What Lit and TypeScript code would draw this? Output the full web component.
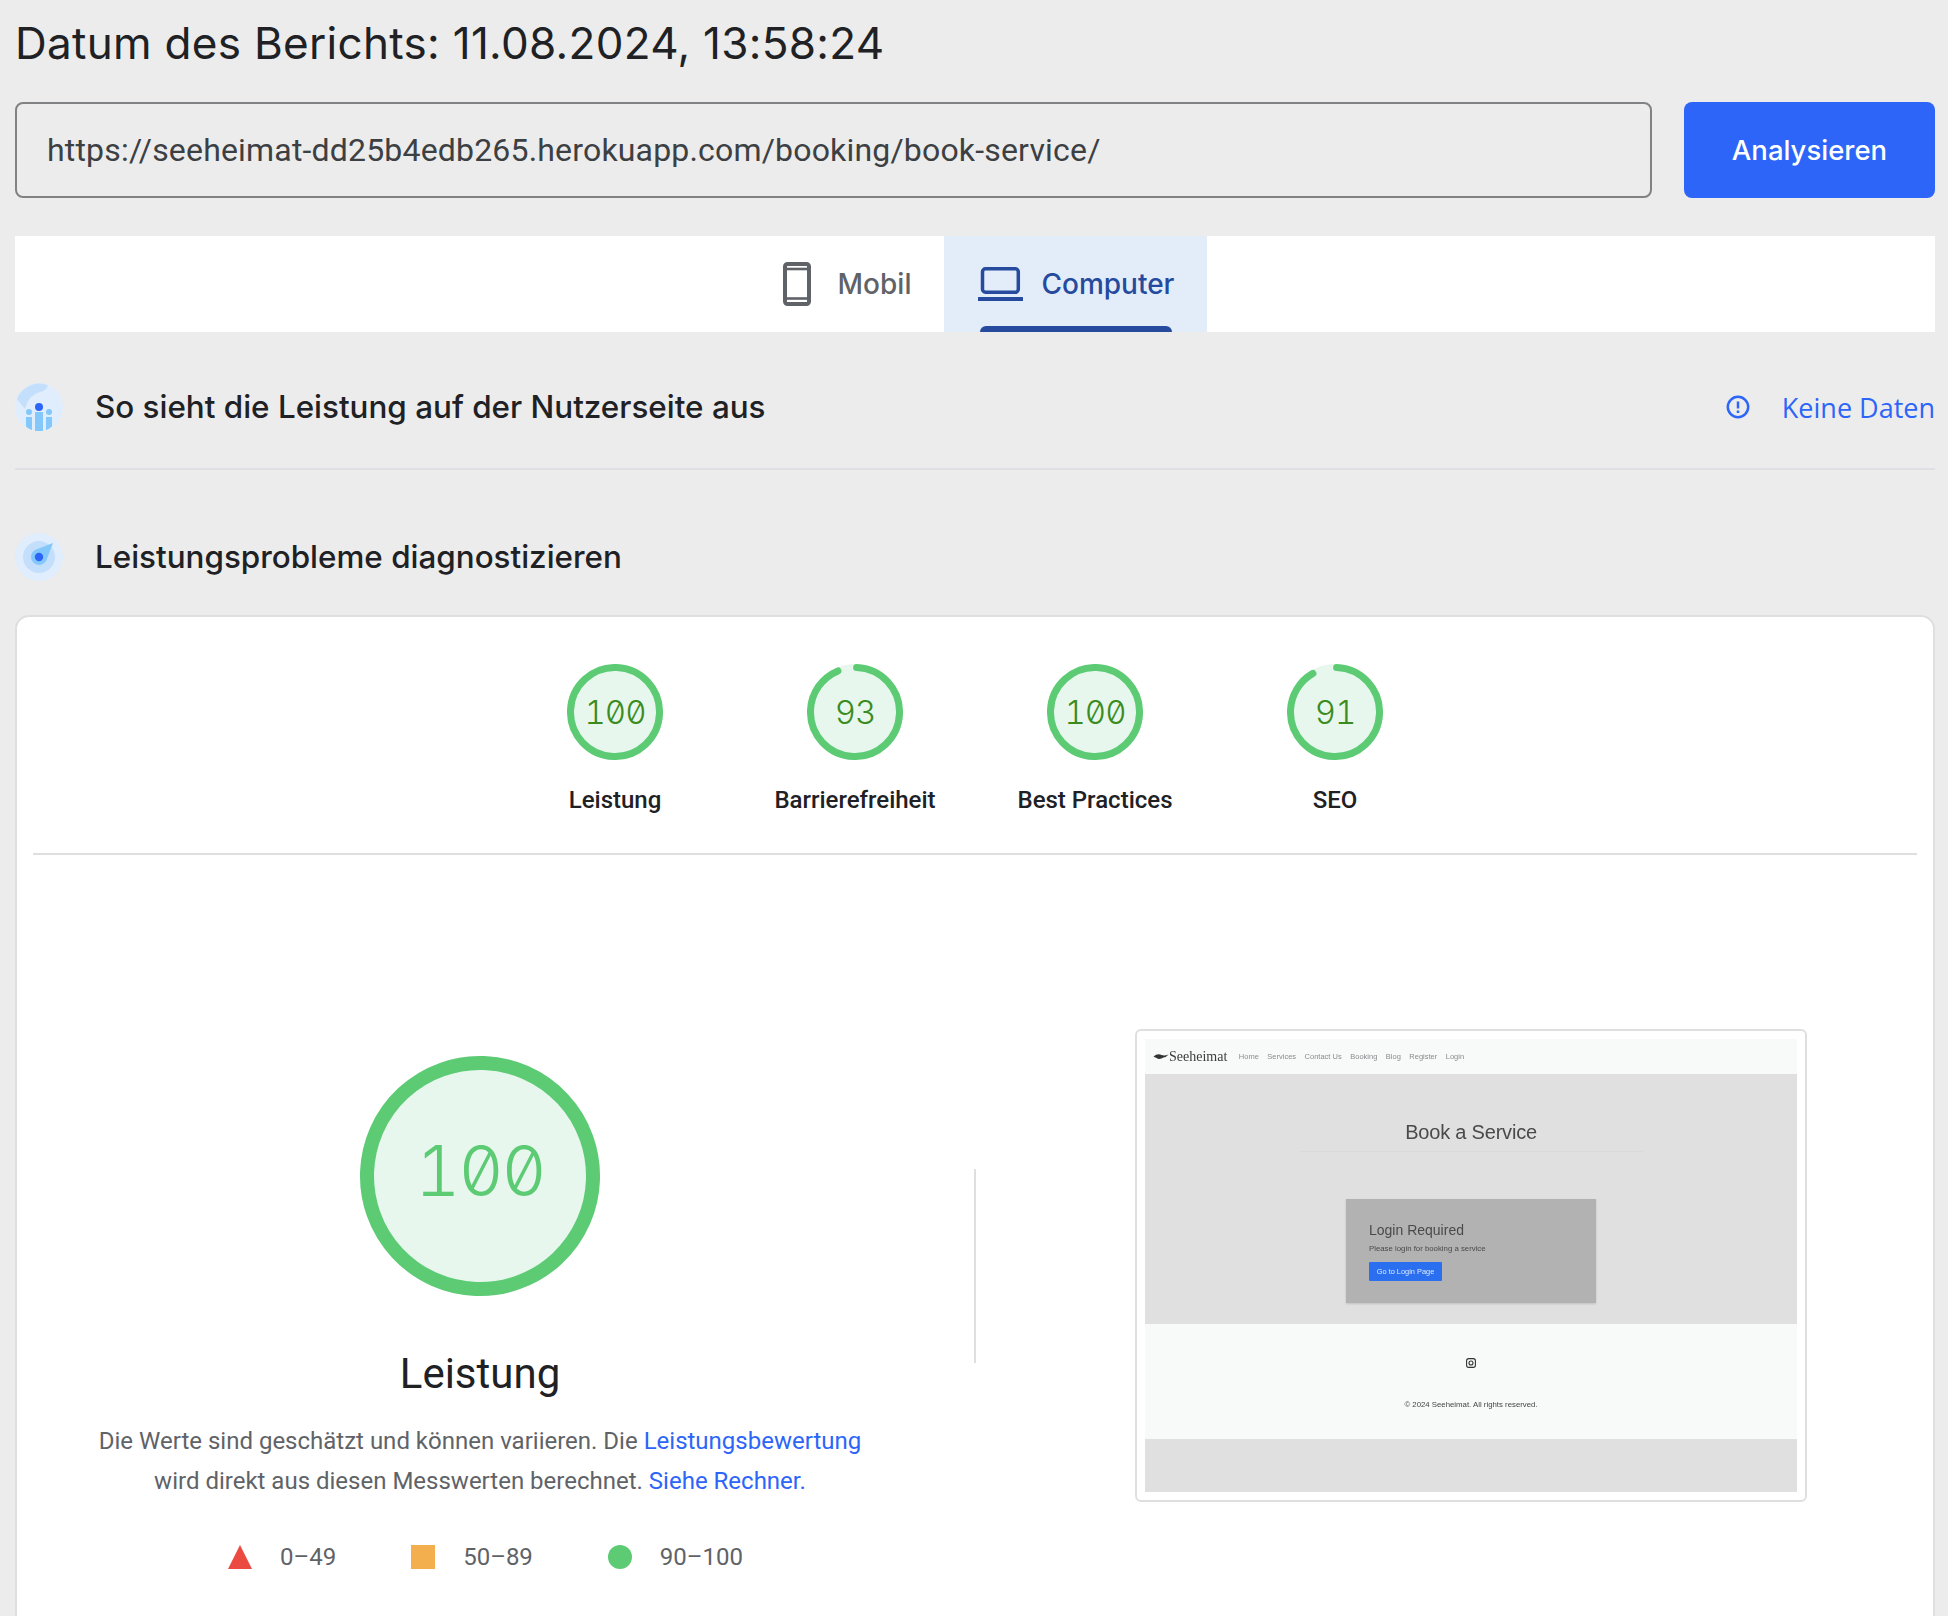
import { LitElement, html, css, svg } from 'lit';
import { customElement, property } from 'lit/decorators.js';

const GREEN = '#5ccb74';

@customElement('score-gauge')
export class ScoreGauge extends LitElement {
  static styles = css`
    :host {
      display: block;
    }
    svg {
      display: block;
      width: 100%;
      height: 100%;
    }
    text {
      font-family: Inter, sans-serif;
      font-weight: 350;
      font-feature-settings: 'tnum', 'zero';
      text-anchor: middle;
      dominant-baseline: central;
    }
  `;

  @property({ type: Number }) score = 100;
  @property({ type: Number }) size = 96;
  @property({ type: Number }) ring = 7;
  @property({ type: Number, attribute: 'font-size' }) textSize = 28;
  @property({ type: Number }) lift = 0;
  @property({ type: String }) ink = '#3a8c20';

  render() {
    const c = this.size / 2;
    const r = c - this.ring / 2;
    const circ = 2 * Math.PI * r;
    const dash = this.score >= 100 ? `${circ} 0` : `${(this.score / 100) * circ} ${circ}`;
    return html`<svg viewBox="0 0 ${this.size} ${this.size}">
      ${svg`<circle cx=${c} cy=${c} r=${c} fill="#e7f7ee"></circle>
        <circle cx=${c} cy=${c} r=${r} fill="none" stroke=${GREEN} stroke-width=${this.ring}
          stroke-linecap="round" stroke-dasharray=${dash} transform="rotate(-87.9 ${c} ${c})"></circle>
        <text x=${c} y=${c - this.lift} fill=${this.ink} font-size=${this.textSize}
          letter-spacing=${-this.textSize * 0.03}>${this.score}</text>`}
    </svg>`;
  }
}

@customElement('page-preview')
export class PagePreview extends LitElement {
  static styles = css`
    :host {
      display: block;
      width: 672px;
      height: 473px;
      box-sizing: border-box;
      border: 2px solid #dfdfdf;
      border-radius: 6px;
      padding: 8px;
      font-family: 'Liberation Sans', sans-serif;
    }
    .shot {
      height: 100%;
      display: flex;
      flex-direction: column;
      background: #e0e0e0;
      filter: blur(0.6px);
    }
    nav {
      height: 35px;
      flex: none;
      background: #f8f9f9;
      display: flex;
      align-items: center;
      padding-left: 8px;
      color: #8a8c8e;
      font-size: 7.5px;
      gap: 8.5px;
    }
    .brand {
      display: flex;
      align-items: center;
      gap: 0;
      font-family: 'Liberation Serif', serif;
      font-size: 14px;
      color: #3c3c3c;
      margin-right: 3px;
    }
    .hero {
      height: 250px;
      flex: none;
      box-sizing: border-box;
      padding-top: 47px;
      display: flex;
      flex-direction: column;
      align-items: center;
    }
    h2 {
      margin: 0;
      font-size: 20px;
      letter-spacing: -0.2px;
      font-weight: 400;
      line-height: 22px;
      color: #4a4a4a;
    }
    .hero hr {
      width: 344px;
      margin: 8px 0 0;
      border: 0;
      height: 1px;
      background: #dadada;
    }
    .login {
      width: 250px;
      height: 104px;
      margin-top: 47px;
      box-sizing: border-box;
      padding: 23px;
      background: #b2b2b2;
      box-shadow: 0 1px 2px rgba(0, 0, 0, 0.15);
      color: #4a4a4a;
    }
    h3 {
      margin: 0;
      font-size: 14px;
      font-weight: 400;
      line-height: 17px;
    }
    .login p {
      margin: 5px 0 0;
      font-size: 7.8px;
      line-height: 10px;
    }
    .go {
      width: 73px;
      height: 19px;
      margin-top: 8px;
      background: #2a6ff0;
      border-radius: 1px;
      color: #dfe9fb;
      font-size: 7.4px;
      display: flex;
      align-items: center;
      justify-content: center;
    }
    footer {
      height: 115px;
      flex: none;
      background: #f8f9f9;
      display: flex;
      flex-direction: column;
      align-items: center;
      color: #444;
      font-size: 7.8px;
    }
    footer svg {
      margin-top: 34px;
      display: block;
    }
    footer p {
      margin: 32px 0 0;
      line-height: 10px;
    }
  `;

  render() {
    return html`<div class="shot">
      <nav>
        <span class="brand">
          <svg width="16" height="7" viewBox="0 0 15 7"><path d="M0 3.5 Q4 0 8 2 Q11 3 15 1.5 Q13 4 10 4.6 Q6 7 3 5 Q1.5 4 0 3.5Z" fill="#333"></path></svg>
          Seeheimat
        </span>
        <span>Home</span><span>Services</span><span>Contact Us</span><span>Booking</span><span>Blog</span><span>Register</span><span>Login</span>
      </nav>
      <div class="hero">
        <h2>Book a Service</h2>
        <hr />
        <div class="login">
          <h3>Login Required</h3>
          <p>Please login for booking a service</p>
          <div class="go">Go to Login Page</div>
        </div>
      </div>
      <footer>
        <svg width="10" height="10" viewBox="0 0 10 10" fill="none" stroke="#333" stroke-width="1.1">
          <rect x="0.6" y="0.6" width="8.8" height="8.8" rx="2.2"></rect>
          <circle cx="5" cy="5" r="2"></circle>
        </svg>
        <p>© 2024 Seeheimat. All rights reserved.</p>
      </footer>
    </div>`;
  }
}

@customElement('app-root')
export class AppRoot extends LitElement {
  static styles = css`
    :host {
      display: block;
      width: 1948px;
      height: 1616px;
      overflow: hidden;
      box-sizing: border-box;
      padding: 0 13px 0 15px;
      background: #ececec;
      color: #202124;
      font-family: Roboto, sans-serif;
    }
    h1 {
      margin: 0;
      height: 84px;
      line-height: 86px;
      font-family: Inter, sans-serif;
      font-size: 44px;
      letter-spacing: 0.3px;
      font-weight: 400;
    }
    .search {
      margin-top: 18px;
      display: flex;
      gap: 32px;
      height: 96px;
    }
    .url {
      flex: 1;
      box-sizing: border-box;
      border: 2px solid #808284;
      border-radius: 8px;
      padding-left: 30px;
      display: flex;
      align-items: center;
      font-size: 32px;
      letter-spacing: 0.18px;
      color: #3c4043;
    }
    .analyze {
      width: 251px;
      background: #2d65f8;
      border-radius: 8px;
      color: #fff;
      font-family: Inter, sans-serif;
      font-size: 27.5px;
      font-weight: 500;
      display: flex;
      align-items: center;
      justify-content: center;
    }
    .tabs {
      margin-top: 38px;
      height: 96px;
      background: #fff;
      display: flex;
      justify-content: center;
      padding-left: 6px;
      font-family: Inter, sans-serif;
      font-size: 28px;
      font-weight: 500;
    }
    .tab {
      display: flex;
      align-items: center;
      gap: 27px;
      padding: 0 33px 0 34px;
      color: #5f6368;
      position: relative;
    }
    .tab.active {
      background: #e3edfa;
      color: #254a9e;
      gap: 18px;
    }
    .tab.active::after {
      content: '';
      position: absolute;
      left: 36px;
      right: 35px;
      bottom: 0;
      height: 6px;
      background: #254a9e;
      border-radius: 6px 6px 0 0;
    }
    .tab svg {
      display: block;
      flex: none;
    }
    .section {
      display: flex;
      align-items: center;
      gap: 32px;
      font-family: Inter, sans-serif;
      font-size: 31.4px;
      font-weight: 500;
    }
    .section svg {
      display: block;
      flex: none;
    }
    .section span.name {
      flex: 1;
    }
    .field {
      margin-top: 51px;
      padding-bottom: 37px;
      border-bottom: 2px solid #dfe0e3;
    }
    .diag {
      margin-top: 63px;
    }
    .nodata {
      display: flex;
      align-items: center;
      gap: 32px;
      color: #2d65f8;
      font-family: 'Open Sans', sans-serif;
      font-size: 27px;
      font-weight: 400;
    }
    .card {
      margin-top: 34px;
      box-sizing: border-box;
      height: 1100px;
      background: #fff;
      border: 2px solid #dfdfdf;
      border-radius: 14px;
      padding: 0 16px;
    }
    .scores {
      height: 238px;
      box-sizing: border-box;
      padding-top: 47px;
      border-bottom: 2px solid #dfdfdf;
      display: flex;
      justify-content: center;
      gap: 80px;
    }
    .score {
      width: 160px;
      display: flex;
      flex-direction: column;
      align-items: center;
      gap: 26px;
      font-size: 24px;
      font-weight: 500;
      line-height: 28px;
      white-space: nowrap;
    }
    .score score-gauge {
      width: 96px;
      height: 96px;
    }
    .detail {
      display: flex;
      padding-top: 174px;
    }
    .summary {
      width: 768px;
      margin-left: 63px;
      display: flex;
      flex-direction: column;
      align-items: center;
    }
    .summary score-gauge {
      width: 240px;
      height: 240px;
      margin-top: 27px;
    }
    .summary h2 {
      margin: 52px 0 0;
      font-size: 42px;
      font-weight: 400;
      line-height: 52px;
    }
    .summary p {
      margin: 21px 0 0;
      width: 768px;
      text-align: center;
      font-size: 24px;
      line-height: 40px;
      color: #5f6368;
    }
    a {
      color: #2d65f8;
      text-decoration: none;
    }
    .legend {
      margin: 40px 0 0 11px;
      display: flex;
      gap: 75px;
      font-size: 24px;
      line-height: 32px;
      color: #5f6368;
    }
    .legend div {
      display: flex;
      align-items: center;
      gap: 28px;
    }
    .legend svg {
      display: block;
    }
    .rule {
      width: 2px;
      height: 194px;
      background: #dfdfdf;
      margin: 140px 0 0 110px;
      flex: none;
    }
    page-preview {
      flex: none;
      margin-left: 159px;
    }
  `;

  render() {
    return html`
      <h1>Datum des Berichts: 11.08.2024, 13:58:24</h1>
      <div class="search">
        <div class="url">https://seeheimat-dd25b4edb265.herokuapp.com/booking/book-service/</div>
        <div class="analyze">Analysieren</div>
      </div>
      <div class="tabs">
        <div class="tab">
          <svg width="28" height="44" viewBox="0 0 28 44" fill="currentColor">
            <rect x="2" y="2" width="24" height="40" rx="2.5" fill="none" stroke="currentColor" stroke-width="4"></rect>
            <rect x="4" y="5.7" width="20" height="2.6"></rect>
            <rect x="4" y="35.2" width="20" height="2.6"></rect>
          </svg>
          Mobil
        </div>
        <div class="tab active">
          <svg width="45" height="34" viewBox="0 0 45 34" fill="currentColor">
            <rect x="4.5" y="1.75" width="35.8" height="23.5" rx="3" fill="none" stroke="currentColor" stroke-width="3.5"></rect>
            <rect x="0" y="30" width="45" height="4" rx="0.5"></rect>
          </svg>
          Computer
        </div>
      </div>
      <div class="section field">
        <svg width="48" height="48" viewBox="0 0 48 48">
          <circle cx="24" cy="24" r="24" fill="#e0edfd"></circle>
          <path d="M2 16 L10 26 Q12 18 16 14 Q20 10 25 9 Q31 8 33 2.2 A24 24 0 0 0 2 16Z" fill="#c4dffb"></path>
          <path d="M11 34 h6 v13 Q13 45.5 11 43.5 Z M20 29 h8 v19 h-8 Z M31 34 h6 v9.5 Q34 46 31 47 Z" fill="#84c7fb"></path>
          <circle cx="14" cy="29" r="3" fill="#84c7fb"></circle>
          <circle cx="34" cy="29" r="3" fill="#84c7fb"></circle>
          <circle cx="24" cy="24" r="4" fill="#2d65f8"></circle>
        </svg>
        <span class="name">So sieht die Leistung auf der Nutzerseite aus</span>
        <span class="nodata">
          <svg width="24" height="24" viewBox="0 0 24 24" fill="none" stroke="currentColor" stroke-width="2.5">
            <circle cx="12" cy="12" r="10.2"></circle>
            <path d="M12 6.5v7M12 15.5v2.5"></path>
          </svg>
          Keine Daten
        </span>
      </div>
      <div class="section diag">
        <svg width="48" height="48" viewBox="0 0 48 48">
          <circle cx="24" cy="24" r="24" fill="#e0edfd"></circle>
          <circle cx="24" cy="24" r="16" fill="#c4dffb"></circle>
          <path d="M38 10 L31.5 26.9 A8 8 0 1 1 21.1 16.5 Z" fill="#84c7fb"></path>
          <circle cx="24" cy="24" r="4.2" fill="#2d65f8"></circle>
        </svg>
        <span class="name">Leistungsprobleme diagnostizieren</span>
      </div>
      <div class="card">
        <div class="scores">
          <div class="score"><score-gauge score="100" size="96" ring="7" font-size="33"></score-gauge>Leistung</div>
          <div class="score"><score-gauge score="93" size="96" ring="7" font-size="33"></score-gauge>Barrierefreiheit</div>
          <div class="score"><score-gauge score="100" size="96" ring="7" font-size="33"></score-gauge>Best Practices</div>
          <div class="score"><score-gauge score="91" size="96" ring="7" font-size="33"></score-gauge>SEO</div>
        </div>
        <div class="detail">
          <div class="summary">
            <score-gauge score="100" size="240" ring="14" font-size="70" lift="6" ink=${GREEN}></score-gauge>
            <h2>Leistung</h2>
            <p>Die Werte sind geschätzt und können variieren. Die <a>Leistungsbewertung</a><br />wird direkt aus diesen Messwerten berechnet. <a>Siehe Rechner.</a></p>
            <div class="legend">
              <div><svg width="24" height="24" viewBox="0 0 24 24"><path d="M12 0 L24 24 H0 Z" fill="#eb4a40"></path></svg>0–49</div>
              <div><svg width="24" height="24" viewBox="0 0 24 24"><rect width="24" height="24" fill="#f3ae4d"></rect></svg>50–89</div>
              <div><svg width="24" height="24" viewBox="0 0 24 24"><circle cx="12" cy="12" r="12" fill=${GREEN}></circle></svg>90–100</div>
            </div>
          </div>
          <div class="rule"></div>
          <page-preview></page-preview>
        </div>
      </div>
    `;
  }
}
